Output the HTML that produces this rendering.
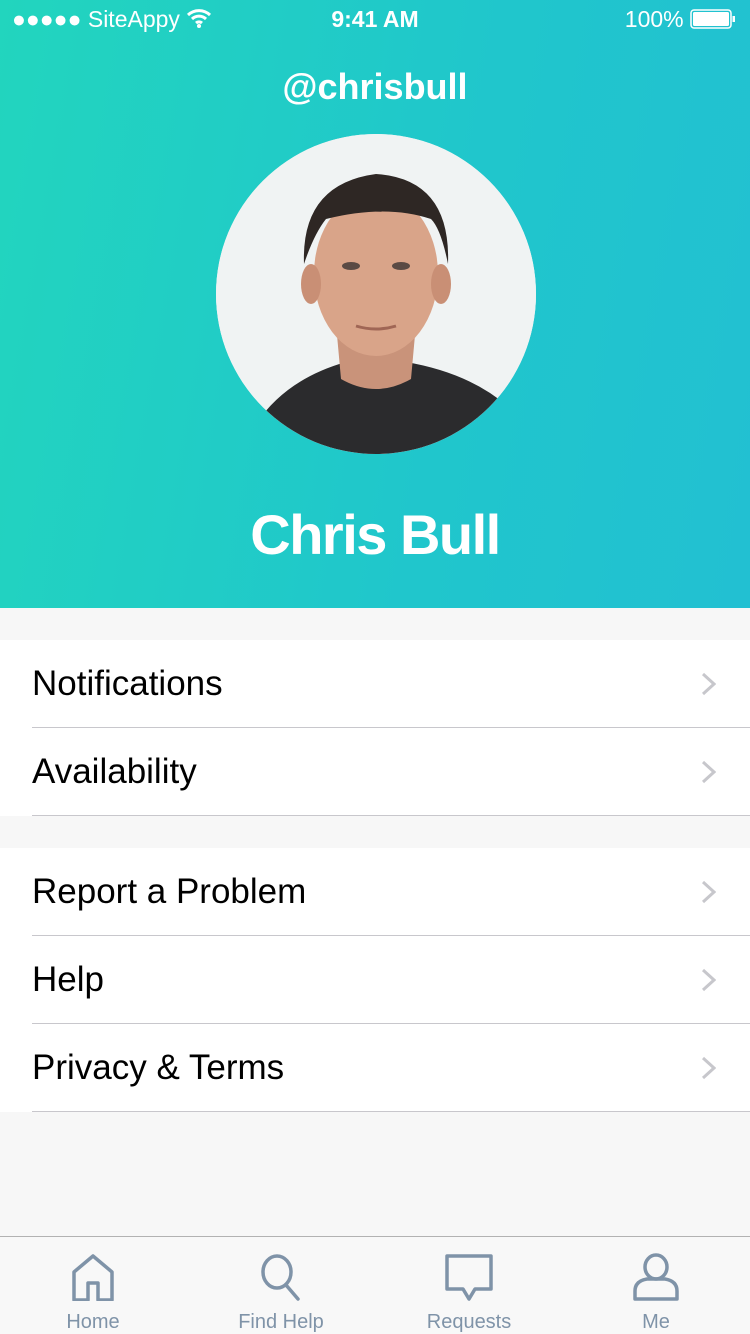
<!DOCTYPE html>
<html><head><meta charset="utf-8"><style>
*{margin:0;padding:0;box-sizing:border-box}
body{width:750px;height:1334px;background:#f7f7f7;font-family:"Liberation Sans",sans-serif;position:relative;overflow:hidden}
.hdr{position:absolute;left:0;top:0;width:750px;height:608px;background:linear-gradient(100deg,#22d5be 0%,#20c6cc 60%,#22c0d2 100%)}
.sb{position:absolute;top:6px;color:#fff;font-size:23px}
.user{position:absolute;top:66px;width:750px;text-align:center;color:#fff;font-weight:bold;font-size:36px}
.name{position:absolute;top:502px;width:750px;text-align:center;color:#fff;font-weight:bold;font-size:56px;letter-spacing:-1.5px}
.av{position:absolute;left:216px;top:134px;width:320px;height:320px;border-radius:50%;overflow:hidden;background:#f1f3f3}
.sec{position:absolute;left:0;width:750px;background:#fff}
.row{height:88px;position:relative;font-size:35px;color:#000;padding-left:32px;line-height:88px}
.row:after{content:"";position:absolute;left:32px;right:0;bottom:0;border-bottom:1px solid #c8c7cc}
.chev{position:absolute;right:34px;top:32px;width:15px;height:24px}
.tab{position:absolute;top:1236px;left:0;width:750px;height:98px;background:#f8f8f8;border-top:1px solid #b2b2b2}
.ti{position:absolute;top:0;width:188px;text-align:center;color:#7f93a8;font-size:20px}
.ti svg{position:absolute;top:16px;left:50%;transform:translateX(-50%)}
.ti span{position:absolute;top:74px;left:0;width:100%}
</style></head><body>
<div class="hdr">
<div class="sb" style="left:12px">●●●●● SiteAppy
<svg width="26" height="20" viewBox="0 0 26 20" style="vertical-align:-1px"><path d="M2 7a16 16 0 0 1 22 0M6 11a10 10 0 0 1 14 0M10 15a4.5 4.5 0 0 1 6 0" stroke="#fff" stroke-width="3" fill="none"/><circle cx="13" cy="18" r="2" fill="#fff"/></svg></div>
<div class="sb" style="left:0;width:750px;text-align:center;font-weight:bold">9:41 AM</div>
<div class="sb" style="right:14px">100% <svg width="46" height="20" viewBox="0 0 46 20" style="vertical-align:-2px"><rect x="1" y="1" width="40" height="18" rx="3" fill="none" stroke="#fff" stroke-width="1.5"/><rect x="3" y="3" width="36" height="14" rx="1.5" fill="#fff"/><rect x="42.5" y="7" width="2.5" height="6" fill="#fff"/></svg></div>
<div class="user">@chrisbull</div>
<div class="av">
<svg width="320" height="320" viewBox="0 0 320 320">
<rect width="320" height="320" fill="#f0f3f3"/>
<path d="M40 290 Q70 245 130 228 L190 228 Q260 240 300 280 L320 320 L0 320 Z" fill="#2b2b2d"/>
<path d="M120 190 L125 245 Q160 265 195 245 L200 190 Z" fill="#c9937a"/>
<ellipse cx="160" cy="140" rx="62" ry="82" fill="#d9a489"/>
<ellipse cx="95" cy="150" rx="10" ry="20" fill="#c98f75"/>
<ellipse cx="225" cy="150" rx="10" ry="20" fill="#c98f75"/>
<path d="M88 130 Q85 50 160 40 Q235 45 232 130 Q225 95 215 85 Q170 70 110 85 Q98 100 88 130 Z" fill="#2e2724"/>
<ellipse cx="135" cy="132" rx="9" ry="4" fill="#5a4a44"/><ellipse cx="185" cy="132" rx="9" ry="4" fill="#5a4a44"/>
<path d="M140 192 Q160 198 180 192" stroke="#a06655" stroke-width="3" fill="none"/>
</svg></div>
<div class="name">Chris Bull</div>
</div>
<svg width="0" height="0" style="position:absolute"><defs><path id="c" d="M2 2 L13 12 L2 22" stroke="#c7c7cc" stroke-width="3" fill="none"/></defs></svg>
<div class="sec" style="top:640px">
<div class="row">Notifications<svg class="chev" viewBox="0 0 15 24"><use href="#c"/></svg></div>
<div class="row">Availability<svg class="chev" viewBox="0 0 15 24"><use href="#c"/></svg></div>
</div>
<div class="sec" style="top:848px">
<div class="row">Report a Problem<svg class="chev" viewBox="0 0 15 24"><use href="#c"/></svg></div>
<div class="row">Help<svg class="chev" viewBox="0 0 15 24"><use href="#c"/></svg></div>
<div class="row">Privacy &amp; Terms<svg class="chev" viewBox="0 0 15 24"><use href="#c"/></svg></div>
</div>
<div class="tab">
<div class="ti" style="left:-1px"><svg width="44" height="48" viewBox="0 0 44 48"><path d="M3 47 V19 L22 3 L41 19 V47 H27 V30 H17 V47 Z" fill="none" stroke="#7f93a8" stroke-width="3.5" stroke-linejoin="round"/></svg><span>Home</span></div>
<div class="ti" style="left:187px"><svg width="44" height="48" viewBox="0 0 44 48"><ellipse cx="18" cy="19" rx="14" ry="16" fill="none" stroke="#7f93a8" stroke-width="3.5"/><path d="M27 32 L39 46" stroke="#7f93a8" stroke-width="3.5" stroke-linecap="round"/></svg><span>Find Help</span></div>
<div class="ti" style="left:375px"><svg width="50" height="48" viewBox="0 0 50 48"><path d="M3 3 H47 V36 H31 L25 46 L19 36 H3 Z" fill="none" stroke="#7f93a8" stroke-width="3.5" stroke-linejoin="round"/></svg><span>Requests</span></div>
<div class="ti" style="left:562px"><svg width="48" height="48" viewBox="0 0 48 48"><ellipse cx="24" cy="14" rx="11" ry="12" fill="none" stroke="#7f93a8" stroke-width="3.5"/><path d="M3 46 V38 Q3 28 15 26 H33 Q45 28 45 38 V46 Z" fill="none" stroke="#7f93a8" stroke-width="3.5" stroke-linejoin="round"/></svg><span>Me</span></div>
</div>
</body></html>
